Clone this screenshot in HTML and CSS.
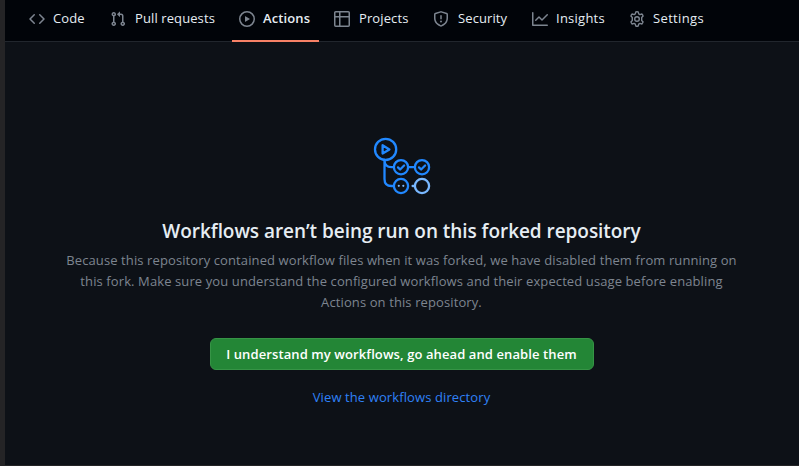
FILE: index.html
```html
<!DOCTYPE html>
<html lang="en">
<head>
<meta charset="utf-8">
<title>Actions</title>
<link rel="stylesheet" href="styles.css">
</head>
<body>
<div class="page">
  <nav class="tabs">
    <a class="tab tab-code"><svg class="icon" viewBox="0 0 16 16"><path d="M4.72 3.22a.75.75 0 011.06 1.06L2.06 8l3.72 3.72a.75.75 0 11-1.06 1.06L.47 8.53a.75.75 0 010-1.06l4.25-4.25zm6.56 0a.75.75 0 10-1.06 1.06L13.94 8l-3.72 3.72a.75.75 0 101.06 1.06l4.25-4.25a.75.75 0 000-1.06l-4.25-4.25z"/></svg><span>Code</span></a>
    <a class="tab tab-pulls"><svg class="icon" viewBox="0 0 16 16"><path fill-rule="evenodd" d="M7.177 3.073L9.573.677A.25.25 0 0110 .854v4.792a.25.25 0 01-.427.177L7.177 3.427a.25.25 0 010-.354zM3.75 2.5a.75.75 0 100 1.5.75.75 0 000-1.5zm-2.25.75a2.25 2.25 0 113 2.122v5.256a2.251 2.251 0 11-1.5 0V5.372A2.25 2.25 0 011.5 3.25zM11 2.5h-1V4h1a1 1 0 011 1v5.628a2.251 2.251 0 101.5 0V5A2.5 2.5 0 0011 2.5zm1 10.25a.75.75 0 111.5 0 .75.75 0 01-1.5 0zM3.75 12a.75.75 0 100 1.5.75.75 0 000-1.5z"/></svg><span>Pull requests</span></a>
    <a class="tab tab-actions"><svg class="icon" viewBox="0 0 16 16"><path fill-rule="evenodd" d="M1.5 8a6.5 6.5 0 1113 0 6.5 6.5 0 01-13 0zM8 0a8 8 0 100 16A8 8 0 008 0zM6.379 5.227A.25.25 0 006 5.442v5.117a.25.25 0 00.379.214l4.264-2.559a.25.25 0 000-.428L6.379 5.227z"/></svg><span>Actions</span></a>
    <a class="tab tab-projects"><svg class="icon" viewBox="0 0 16 16"><path fill-rule="evenodd" d="M0 1.75C0 .784.784 0 1.75 0h12.5C15.216 0 16 .784 16 1.75v12.5A1.75 1.75 0 0114.25 16H1.75A1.75 1.75 0 010 14.25V1.75zM1.5 6.5v7.75c0 .138.112.25.25.25H5v-8H1.5zM5 5H1.5V1.75a.25.25 0 01.25-.25H5V5zm1.5 1.5v8h7.75a.25.25 0 00.25-.25V6.5h-8zm8-1.5h-8V1.5h7.75a.25.25 0 01.25.25V5z"/></svg><span>Projects</span></a>
    <a class="tab tab-security"><svg class="icon" viewBox="0 0 16 16"><path fill-rule="evenodd" d="M7.467.133a1.75 1.75 0 011.066 0l5.25 1.68A1.75 1.75 0 0115 3.48V7c0 1.566-.32 3.182-1.303 4.682-.983 1.498-2.585 2.813-5.032 3.855a1.7 1.7 0 01-1.33 0c-2.447-1.042-4.049-2.357-5.032-3.855C1.32 10.182 1 8.566 1 7V3.48a1.75 1.75 0 011.217-1.667l5.25-1.68zm.61 1.429a.25.25 0 00-.153 0l-5.25 1.68a.25.25 0 00-.174.238V7c0 1.358.275 2.666 1.057 3.86.784 1.194 2.121 2.34 4.366 3.297a.2.2 0 00.154 0c2.245-.956 3.582-2.104 4.366-3.298C13.225 9.666 13.5 8.36 13.5 7V3.48a.25.25 0 00-.174-.237l-5.25-1.68zM8.75 4.75a.75.75 0 00-1.5 0v3a.75.75 0 001.5 0v-3zM9 10.5a1 1 0 11-2 0 1 1 0 012 0z"/></svg><span>Security</span></a>
    <a class="tab tab-insights"><svg class="icon" viewBox="0 0 16 16"><path fill-rule="evenodd" d="M1.5 1.75a.75.75 0 00-1.5 0v12.5c0 .414.336.75.75.75h14.5a.75.75 0 000-1.5H1.5V1.75zm14.28 2.53a.75.75 0 00-1.06-1.06L10 7.94 7.53 5.47a.75.75 0 00-1.06 0L3.22 8.72a.75.75 0 001.06 1.06L7 7.06l2.47 2.47a.75.75 0 001.06 0l5.25-5.25z"/></svg><span>Insights</span></a>
    <a class="tab tab-settings"><svg class="icon gear" viewBox="0 0 16 16"><path d="M6.8.9Q8 .6 9.2.9L9.7 2.9 10.9 3.6 12.9 3Q13.7 3.8 14.1 5.1L12.7 6.6V9.4L14.1 10.9Q13.7 12.2 12.9 13L10.9 12.4 9.7 13.1 9.2 15.1Q8 15.4 6.8 15.1L6.3 13.1 5.1 12.4 3.1 13Q2.3 12.2 1.9 10.9L3.3 9.4V6.6L1.9 5.1Q2.3 3.8 3.1 3L5.1 3.6 6.3 2.9Z"/><circle cx="8" cy="8" r="2.3"/></svg><span>Settings</span></a>
  </nav>
  <main class="blank">
    <svg class="hero" viewBox="373 137 58 58">
      <g class="flow">
        <circle cx="385.6" cy="149.4" r="10.6"/>
        <path d="M382.6 145.2v8.4l6.8-4.2z"/>
        <path d="M384.5 160v19q0 7 7 7h2.4M384.5 160q0 7.2 7 7.2h2.4M408.1 167.2h6.8"/>
        <circle cx="401" cy="167.2" r="7.1"/><circle cx="422" cy="167.2" r="7.1"/><circle cx="401" cy="186" r="7.1"/>
        <path d="M398 167.4l2.1 2.1 4-4M419 167.4l2.1 2.1 4-4"/>
      </g>
      <g class="dots"><circle cx="398.8" cy="185.8" r="1.1"/><circle cx="403.3" cy="185.8" r="1.1"/></g>
      <g class="pending"><path d="M412.6 186h2"/><circle cx="422" cy="186" r="7.1"/></g>
    </svg>
    <h1>Workflows aren’t being run on this forked repository</h1>
    <p>Because this repository contained workflow files when it was forked, we have disabled them from running on<br>this fork. Make sure you understand the configured workflows and their expected usage before enabling<br>Actions on this repository.</p>
    <button>I understand my workflows, go ahead and enable them</button>
    <a class="link">View the workflows directory</a>
  </main>
</div>
</body>
</html>
```
FILE: styles.css
```css
* { box-sizing: border-box; }
body { margin: 0; height: 466px; overflow: hidden; background: #0d1117; font: 13px/21px "Open Sans", "Noto Sans", sans-serif; letter-spacing: 0.105px; }
.page { height: 466px; border-left: 5px solid #242426; border-bottom: 1px solid #242426; }
.tabs { display: flex; height: 42px; padding-left: 16px; background: #010409; border-bottom: 1px solid #21262d; }
.tab { display: flex; height: 42px; padding: 0 0 5px 8px; align-items: center; color: #e6edf3; white-space: nowrap; flex: none; }
.icon { width: 16px; height: 16px; margin-right: 8px; fill: #7d8590; flex: none; }
.gear { fill: none; stroke: #7d8590; stroke-width: 1.4; stroke-linejoin: round; }
.tab-code { width: 81px; }
.tab-pulls { width: 130px; }
.tab-pulls .icon, .tab-projects .icon { margin-right: 9px; }
.tab-actions { width: 87px; margin-right: 7px; padding: 0 0 3px 7px; border-bottom: 2px solid #f78166; font-weight: 600; }
.tab-projects { width: 99px; }
.tab-security { width: 99px; }
.tab-security .icon { margin-right: 9px; }
.tab-insights { width: 97px; letter-spacing: 0.25px; }
.tab-settings { letter-spacing: 0.35px; }
.blank { display: flex; flex-direction: column; align-items: center; padding-top: 95px; margin-left: -1px; }
.hero { width: 58px; height: 58px; }
.flow, .pending { fill: none; stroke: #2188ff; stroke-width: 2.3; stroke-linecap: round; stroke-linejoin: round; }
.pending { stroke: #79b8ff; }
.dots { fill: #79b8ff; }
h1 { margin: 21px 0 0; font-size: 19px; line-height: 30px; font-weight: 600; letter-spacing: -0.05px; color: #e6edf3; white-space: nowrap; }
p { margin: 4px 0 0; color: #7d8590; text-align: center; white-space: nowrap; }
button { width: 384px; height: 32px; margin: 25px 0 0; padding: 0; border: 1px solid #369446; border-radius: 6px; background: #238636; color: #fff; font: 600 13px/20px "Open Sans", "Noto Sans", sans-serif; letter-spacing: 0.1px; white-space: nowrap; }
.link { margin-top: 17px; color: #2f81f7; }
```
